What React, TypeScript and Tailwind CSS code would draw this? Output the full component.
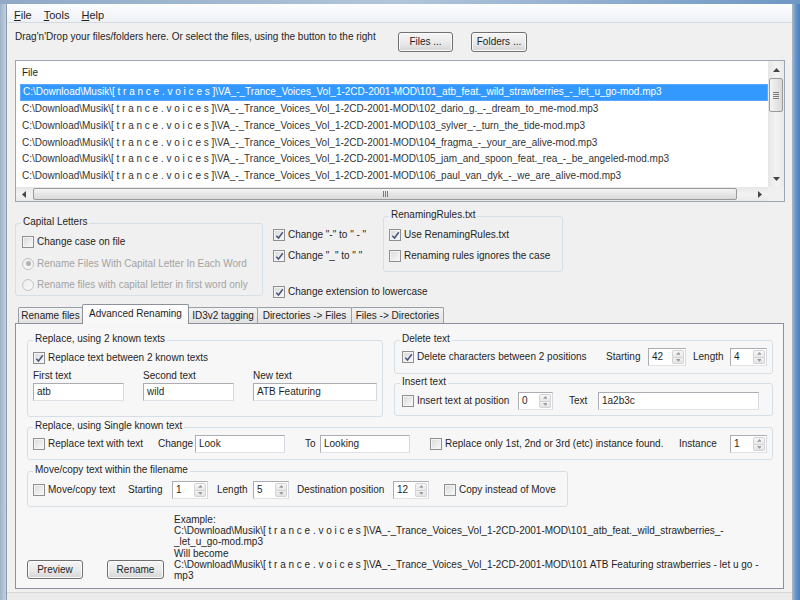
import React from "react";

const PREFIX =
  "C:\\Download\\Musik\\[ t r a n c e . v o i c e s ]\\VA_-_Trance_Voices_Vol_1-2CD-2001-MOD\\";

const FILES = [
  "101_atb_feat._wild_strawberries_-_let_u_go-mod.mp3",
  "102_dario_g._-_dream_to_me-mod.mp3",
  "103_sylver_-_turn_the_tide-mod.mp3",
  "104_fragma_-_your_are_alive-mod.mp3",
  "105_jam_and_spoon_feat._rea_-_be_angeled-mod.mp3",
  "106_paul_van_dyk_-_we_are_alive-mod.mp3",
];

type Dir = "up" | "down" | "left" | "right";

function Tri({ dir, color = "#454545", small = false }: { dir: Dir; color?: string; small?: boolean }) {
  const vertical = dir === "up" || dir === "down";
  const paths: Record<Dir, string> = {
    up: "M0 4 L3.5 0 L7 4 Z",
    down: "M0 0 L7 0 L3.5 4 Z",
    left: "M4 0 L4 7 L0 3.5 Z",
    right: "M0 0 L4 3.5 L0 7 Z",
  };
  const w = vertical ? 7 : 4;
  const h = vertical ? 4 : 7;
  const k = small ? 0.7 : 1;
  return (
    <svg width={w * k} height={h * k} viewBox={`0 0 ${w} ${h}`} className="block">
      <path d={paths[dir]} fill={color} />
    </svg>
  );
}

function Check({ checked = false }: { checked?: boolean }) {
  return (
    <span className="w-[12px] h-[12px] shrink-0 border border-[#8e8f8f] bg-linear-to-br from-[#d9d9d9] to-[#fbfbfb] shadow-[inset_0_0_0_1px_#f4f4f4] flex items-center justify-center">
      {checked && (
        <svg width="9" height="9" viewBox="0 0 9 9" className="block">
          <path d="M1.3 4.7 L3.5 7 L7.8 1.3" fill="none" stroke="#44557e" strokeWidth="1.5" />
        </svg>
      )}
    </span>
  );
}

function CheckRow({
  label,
  checked = false,
  className = "",
}: {
  label: string;
  checked?: boolean;
  className?: string;
}) {
  return (
    <div className={"h-[16px] flex items-center gap-[3px] whitespace-nowrap shrink-0 " + className}>
      <Check checked={checked} />
      <span>{label}</span>
    </div>
  );
}

function RadioRow({ label, selected = false }: { label: string; selected?: boolean }) {
  return (
    <div className="h-[16px] flex items-center gap-[3px] whitespace-nowrap text-[#a3a3a3]">
      <span className="w-[12px] h-[12px] shrink-0 rounded-full border border-[#c3c3c3] bg-linear-to-br from-[#ececec] to-[#fafafa] flex items-center justify-center">
        {selected && <span className="w-[5px] h-[5px] rounded-full bg-[#b3b3b3]" />}
      </span>
      <span>{label}</span>
    </div>
  );
}

function TextBox({ value, className = "" }: { value: string; className?: string }) {
  return (
    <div
      className={
        "h-[18px] shrink-0 border border-[#abadb3] border-b-[#dfe3e8] border-r-[#d6dae0] bg-white pl-[3px] flex items-center whitespace-nowrap " +
        className
      }
    >
      {value}
    </div>
  );
}

function Spin({ value, className = "" }: { value: string; className?: string }) {
  return (
    <div
      className={
        "h-[18px] shrink-0 flex border border-[#abadb3] border-b-[#dfe3e8] border-r-[#d6dae0] bg-white " +
        className
      }
    >
      <span className="flex-1 pl-[3px] flex items-center">{value}</span>
      <div className="w-[13px] flex flex-col py-[1px] pr-[1px]">
        <div className="flex-1 flex items-center justify-center border border-[#d3d3d3] rounded-t-[2px] bg-linear-to-b from-[#f7f7f7] to-[#e8e8e8]">
          <Tri dir="up" color="#9b9b9b" small />
        </div>
        <div className="flex-1 flex items-center justify-center border border-t-0 border-[#d3d3d3] rounded-b-[2px] bg-linear-to-b from-[#f1f1f1] to-[#e3e3e3]">
          <Tri dir="down" color="#9b9b9b" small />
        </div>
      </div>
    </div>
  );
}

function Btn({ label, className = "" }: { label: string; className?: string }) {
  return (
    <div
      className={
        "shrink-0 border border-[#707070] rounded-[3px] bg-linear-to-b from-[#f5f5f5] via-[#ebebeb] to-[#d6d6d6] shadow-[inset_0_0_0_1px_#fbfbfb] flex items-center justify-center whitespace-nowrap " +
        className
      }
    >
      {label}
    </div>
  );
}

function Group({
  title,
  className = "",
  titleBg = "bg-[#f7f7f7]",
  children,
}: {
  title: string;
  className?: string;
  titleBg?: string;
  children: React.ReactNode;
}) {
  return (
    <div className={"relative shrink-0 border border-[#d5dfe5] rounded-[3px] " + className}>
      <span className={"absolute -top-[8px] left-[5px] px-[2px] leading-[12px] whitespace-nowrap " + titleBg}>
        {title}
      </span>
      {children}
    </div>
  );
}

function VScroll() {
  return (
    <div className="w-[16px] shrink-0 flex flex-col bg-linear-to-r from-[#e6e6e6] via-[#f3f3f3] to-[#eaeaea]">
      <div className="h-[17px] flex items-center justify-center">
        <Tri dir="up" />
      </div>
      <div className="h-[34px] mx-[1px] rounded-[2px] border border-[#9a9a9a] bg-linear-to-r from-[#f4f4f4] to-[#d9d9d9] flex flex-col items-center justify-center gap-[1px]">
        <span className="w-[6px] h-[1px] bg-[#7a7a7a]" />
        <span className="w-[6px] h-[1px] bg-[#7a7a7a]" />
        <span className="w-[6px] h-[1px] bg-[#7a7a7a]" />
        <span className="w-[6px] h-[1px] bg-[#7a7a7a]" />
      </div>
      <div className="flex-1" />
      <div className="h-[17px] flex items-center justify-center">
        <Tri dir="down" />
      </div>
    </div>
  );
}

function HScroll() {
  return (
    <div className="flex-1 flex bg-linear-to-b from-[#e6e6e6] via-[#f3f3f3] to-[#eaeaea]">
      <div className="w-[16px] flex items-center justify-center">
        <Tri dir="left" />
      </div>
      <div className="w-[704px] ml-[1px] my-[1px] rounded-[2px] border border-[#9a9a9a] bg-linear-to-b from-[#f4f4f4] to-[#d9d9d9] flex items-center justify-center gap-[1px]">
        <span className="w-[1px] h-[6px] bg-[#7a7a7a]" />
        <span className="w-[1px] h-[6px] bg-[#7a7a7a]" />
        <span className="w-[1px] h-[6px] bg-[#7a7a7a]" />
      </div>
      <div className="flex-1" />
      <div className="w-[16px] flex items-center justify-center">
        <Tri dir="right" />
      </div>
    </div>
  );
}

function Tab({ label, selected = false, className = "" }: { label: string; selected?: boolean; className?: string }) {
  if (selected) {
    return (
      <div
        className={
          "relative z-10 h-[20px] -ml-[1px] pb-[2px] border border-b-0 border-[#8d929a] rounded-t-[2px] bg-linear-to-b from-[#ffffff] to-[#f7f7f7] flex items-center justify-center whitespace-nowrap " +
          className
        }
      >
        {label}
      </div>
    );
  }
  return (
    <div
      className={
        "h-[16px] mb-[1px] border border-b-0 border-[#9a9ea6] rounded-t-[2px] bg-linear-to-b from-[#f3f3f3] to-[#e2e2e2] flex items-center justify-center whitespace-nowrap " +
        className
      }
    >
      {label}
    </div>
  );
}

export default function App() {
  return (
    <div className="w-[800px] h-[600px] overflow-hidden flex flex-col bg-[#f0f0f0] text-[10px] leading-[12px] text-[#1f1f1f] font-['Liberation_Sans',Arial,sans-serif]">
      {/* window top edge */}
      <div className="h-[4px] shrink-0 bg-linear-to-r from-[#8fa9c6] via-[#b2c5da] to-[#6f97c4]" />
      <div className="flex flex-1 min-h-0">
        {/* left window border */}
        <div className="w-[7px] shrink-0 bg-linear-to-r from-[#9fb3c9] to-[#c2d0df] border-r border-[#8a9bb0]" />
        {/* client area */}
        <div className="w-[785px] shrink-0 flex flex-col">
          {/* menu bar */}
          <div className="h-[19px] shrink-0 flex items-center gap-[12px] pl-[7px] pt-[4px] text-[11px] bg-linear-to-b from-[#fcfdfe] to-[#eef1f6] border-b border-[#d5dae1]">
            <span>
              <span className="underline">F</span>ile
            </span>
            <span>
              <span className="underline">T</span>ools
            </span>
            <span>
              <span className="underline">H</span>elp
            </span>
          </div>

          {/* drag drop row */}
          <div className="h-[37px] shrink-0 flex items-start pl-[8px]">
            <span className="mt-[8px] w-[383px] whitespace-nowrap">
              Drag'n'Drop your files/folders here. Or select the files, using the button to the right
            </span>
            <Btn label="Files ..." className="mt-[9px] w-[55px] h-[20px]" />
            <Btn label="Folders ..." className="mt-[9px] ml-[18px] w-[56px] h-[20px]" />
          </div>

          {/* file list */}
          <div className="ml-[8px] w-[770px] h-[142px] shrink-0 border border-[#9ea5ae] bg-white flex flex-col">
            <div className="flex h-[126px]">
              <div className="flex-1 min-w-0 flex flex-col overflow-hidden text-[#333]">
                <div className="h-[23px] shrink-0 flex items-center pl-[6px] text-[#1f1f1f]">File</div>
                {FILES.map((f, i) => (
                  <div
                    key={f}
                    className={
                      i === 0
                        ? "h-[16.75px] shrink-0 ml-[4px] pl-[2px] flex items-center whitespace-nowrap bg-[#3399ff] text-white border border-[#5aa9ff]"
                        : "h-[16.75px] shrink-0 ml-[4px] pl-[2px] flex items-center whitespace-nowrap"
                    }
                  >
                    {PREFIX + f}
                  </div>
                ))}
              </div>
              <VScroll />
            </div>
            <div className="flex h-[14px]">
              <HScroll />
              <div className="w-[16px] bg-[#f0f0f0]" />
            </div>
          </div>

          {/* options */}
          <div className="h-[102px] shrink-0 flex items-start pl-[8px]">
            <Group title="Capital Letters" titleBg="bg-[#f0f0f0]" className="mt-[21px] w-[248px] h-[73px]">
              <div className="pl-[6px] pt-[10px] flex flex-col gap-[5.5px]">
                <CheckRow label="Change case on file" />
                <RadioRow label="Rename Files With Capital Letter In Each Word" selected />
                <RadioRow label="Rename files with capital letter in first word only" />
              </div>
            </Group>
            <div className="ml-[10px] w-[110px] shrink-0 flex flex-col">
              <CheckRow label={'Change "-" to " - "'} checked className="mt-[25px]" />
              <CheckRow label={'Change "_" to " "'} checked className="mt-[5px]" />
              <CheckRow label="Change extension to lowercase" checked className="mt-[20px]" />
            </div>
            <Group title="RenamingRules.txt" titleBg="bg-[#f0f0f0]" className="mt-[14px] w-[180px] h-[56px]">
              <div className="pl-[5px] pt-[10px] flex flex-col gap-[5px]">
                <CheckRow label="Use RenamingRules.txt" checked />
                <CheckRow label="Renaming rules ignores the case" />
              </div>
            </Group>
          </div>

          {/* tabs */}
          <div className="h-[20px] shrink-0 flex items-end pl-[11px]">
            <Tab label="Rename files" className="w-[65px]" />
            <Tab label="Advanced Renaming" selected className="w-[107px]" />
            <Tab label="ID3v2 tagging" className="w-[70px] -ml-[1px]" />
            <Tab label="Directories -> Files" className="w-[95px] -ml-[1px]" />
            <Tab label="Files -> Directories" className="w-[93px] -ml-[1px]" />
          </div>

          {/* tab panel */}
          <div className="ml-[8px] -mt-[1px] w-[769px] h-[266px] shrink-0 border border-[#8d929a] bg-[#f7f7f7] flex flex-col pl-[11px] pr-[10px]">
            {/* row 1 */}
            <div className="mt-[16px] flex items-start">
              <Group title="Replace, using 2 known texts" className="w-[356px] h-[77px]">
                <div className="pl-[5px] pt-[9px] flex flex-col">
                  <CheckRow label="Replace text between 2 known texts" checked />
                  <div className="mt-[4px] h-[12px] flex">
                    <span className="w-[110px]">First text</span>
                    <span className="w-[110px]">Second text</span>
                    <span>New text</span>
                  </div>
                  <div className="mt-[1px] flex">
                    <TextBox value="atb" className="w-[91px]" />
                    <TextBox value="wild" className="w-[91px] ml-[19px]" />
                    <TextBox value="ATB Featuring" className="w-[124px] ml-[19px]" />
                  </div>
                </div>
              </Group>
              <div className="ml-[11px] w-[379px] flex flex-col">
                <Group title="Delete text" className="h-[34px]">
                  <div className="pl-[7px] pt-[7px] flex items-center h-[25px]">
                    <CheckRow label="Delete characters between 2 positions" checked className="w-[204px]" />
                    <span className="w-[42px]">Starting</span>
                    <Spin value="42" className="w-[38px]" />
                    <span className="w-[37px] ml-[7px]">Length</span>
                    <Spin value="4" className="w-[37px]" />
                  </div>
                </Group>
                <Group title="Insert text" className="mt-[9px] h-[33px]">
                  <div className="pl-[7px] pt-[8px] flex items-center h-[26px]">
                    <CheckRow label="Insert text at position" className="w-[116px]" />
                    <Spin value="0" className="w-[35px]" />
                    <span className="w-[29px] ml-[16px]">Text</span>
                    <TextBox value="1a2b3c" className="w-[161px]" />
                  </div>
                </Group>
              </div>
            </div>

            {/* row 2 */}
            <Group title="Replace, using Single known text" className="mt-[10px] h-[33px]">
              <div className="pl-[5px] pt-[7px] flex items-center h-[25px]">
                <CheckRow label="Replace text with text" className="w-[125px]" />
                <span className="w-[37px]">Change</span>
                <TextBox value="Look" className="w-[90px]" />
                <span className="w-[15px] ml-[20px]">To</span>
                <TextBox value="Looking" className="w-[90px]" />
                <CheckRow label="Replace only 1st, 2nd or 3rd (etc) instance found." className="w-[249px] ml-[20px]" />
                <span className="w-[51px]">Instance</span>
                <Spin value="1" className="w-[37px]" />
              </div>
            </Group>

            {/* row 3 */}
            <Group title="Move/copy text within the filename" className="mt-[11px] w-[541px] h-[36px]">
              <div className="pl-[5px] pt-[9px] flex items-center h-[27px]">
                <CheckRow label="Move/copy text" className="w-[95px]" />
                <span className="w-[44px]">Starting</span>
                <Spin value="1" className="w-[36px]" />
                <span className="w-[36px] ml-[9px]">Length</span>
                <Spin value="5" className="w-[36px]" />
                <span className="w-[96px] ml-[8px] whitespace-nowrap">Destination position</span>
                <Spin value="12" className="w-[36px]" />
                <CheckRow label="Copy instead of Move" className="ml-[15px]" />
              </div>
            </Group>

            {/* row 4 */}
            <div className="mt-[7px] flex items-end">
              <Btn label="Preview" className="w-[56px] h-[19px] mb-[2px]" />
              <Btn label="Rename" className="w-[57px] h-[19px] mb-[2px] ml-[24px]" />
              <div className="ml-[10px] leading-[11.2px] whitespace-nowrap">
                <div>Example:</div>
                <div>{PREFIX + "101_atb_feat._wild_strawberries_-"}</div>
                <div>_let_u_go-mod.mp3</div>
                <div>Will become</div>
                <div>{PREFIX + "101 ATB Featuring strawberries - let u go -"}</div>
                <div>mp3</div>
              </div>
            </div>
          </div>

          {/* bottom strip */}
          <div className="flex-1 flex flex-col">
            <div className="h-[3px]" />
            <div className="flex-1 border-t border-[#d7d7d7] bg-[#ebebeb]" />
          </div>
        </div>
        {/* right window border */}
        <div className="flex-1 border-l border-[#a7b4c2] bg-linear-to-r from-[#8fb0d6] via-[#5e8fc7] to-[#4a7fbd]" />
      </div>
    </div>
  );
}
